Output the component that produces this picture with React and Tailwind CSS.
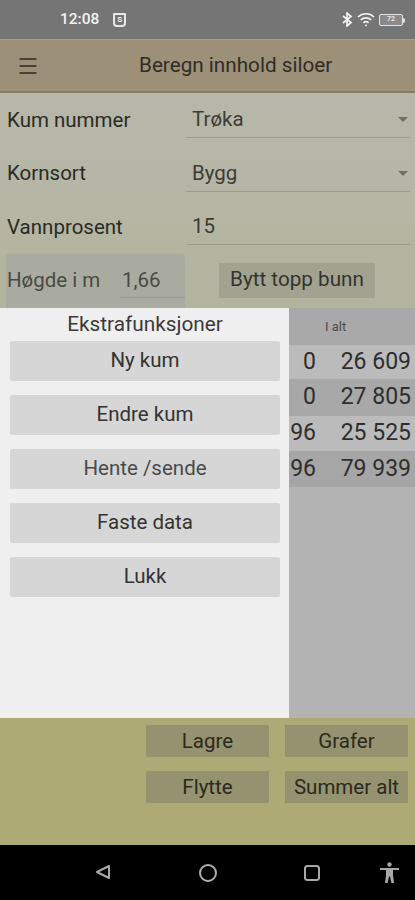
import { Menu } from 'lucide-react';

const font = { fontFamily: 'Roboto, sans-serif' };

const StatusIcons = () => (
    <div className="flex items-center gap-[4px]">
        <svg width="11" height="15" viewBox="0 0 11 15" fill="none" stroke="#f2f2f2" strokeWidth="1.7">
            <path d="M1 4l8 6.5-4 3.5V1l4 3.5L1 11" />
        </svg>
        <svg width="18" height="15" viewBox="0 0 18 15" fill="none" stroke="#f2f2f2" strokeWidth="1.7">
            <path d="M1 5a11.5 11.5 0 0 1 16 0" />
            <path d="M3.8 8a7.5 7.5 0 0 1 10.4 0" />
            <path d="M6.4 10.8a3.8 3.8 0 0 1 5.2 0" />
            <circle cx="9" cy="13.4" r="0.9" fill="#f2f2f2" stroke="none" />
        </svg>
        <div className="relative w-[24px] h-[12px] border border-[#e4e4e4] rounded-[2px] flex items-center justify-center text-[7px] font-bold text-[#e4e4e4] bg-[#8a8a8a]">
            72
            <div className="absolute -right-[3px] top-[3px] w-[2px] h-[5px] bg-[#e4e4e4] rounded-r-sm"></div>
        </div>
    </div>
);

const Caret = () => (
    <div className="w-0 h-0 border-l-[5px] border-r-[5px] border-t-[5px] border-l-transparent border-r-transparent border-t-[#6f7068]"></div>
);

const FormRow = ({ label, value, caret }) => (
    <div className="flex h-[53.5px]">
        <div className="w-[186px] pl-[7px] h-[54px] flex items-center text-[20.5px] text-[#2b2b24]">{label}</div>
        <div className="w-[224px] border-b-[1px] border-[#9b9c8e] h-[45px] flex items-center justify-between pl-[6px] pr-[2px] pt-[9px] text-[20.5px] text-[#3c3c36]">
            <span>{value}</span>
            {caret && <Caret />}
        </div>
    </div>
);

const DialogBtn = ({ children, tone }) => (
    <div className={`h-[39.5px] bg-[#d6d6d6] rounded-[2px] flex items-center justify-center text-[20.5px] ${tone || 'text-[#333333]'}`}>
        {children}
    </div>
);

const rows = [
    { a: '0', b: '26 609', bg: 'bg-[#bbbbbb]', h: 'h-[34px]' },
    { a: '0', b: '27 805', bg: 'bg-[#a8a8a8]', h: 'h-[37px]' },
    { a: '96', b: '25 525', bg: 'bg-[#bbbbbb]', h: 'h-[35px]' },
    { a: '96', b: '79 939', bg: 'bg-[#a6a6a6]', h: 'h-[36px]' },
];

const BottomBtn = ({ children }) => (
    <div className="w-[123px] h-[32px] bg-[#95926f] flex items-center justify-center text-[20.5px] text-[#2a2a20]">
        {children}
    </div>
);

export default function App() {
    return (
        <div style={font} className="w-[415px] h-[900px] flex flex-col overflow-hidden bg-[#b3b4a0]">
            {/* status bar */}
            <div className="h-[39px] bg-[#757575] flex items-center justify-between pl-[60px] pr-[12px] text-[#f2f2f2]">
                <div className="flex items-center gap-[14px]">
                    <span className="text-[15.5px] font-medium">12:08</span>
                    <div className="w-[13px] h-[14px] border-[2px] border-[#e8e8e8] rounded-b-[4px] rounded-t-[1px] flex items-center justify-center text-[8px] font-bold leading-none">S</div>
                </div>
                <StatusIcons />
            </div>

            {/* header */}
            <div className="h-[54px] bg-[#9c9079] border-t border-[#a8a08c] border-b-2 border-b-[#8a7a5c] flex items-center pl-[16px] relative">
                <Menu size={24} strokeWidth={1.3} className="text-[#2c2a24]" />
                <div className="absolute left-[139px] text-[20.7px] text-[#2f2d25]">Beregn innhold siloer</div>
            </div>

            {/* form */}
            <div className="bg-gradient-to-b from-[#b6b7aa] to-[#b3b49d]">
                <FormRow label="Kum nummer" value="Trøka" caret />
                <FormRow label="Kornsort" value="Bygg" caret />
                <FormRow label="Vannprosent" value="15" />
                <div className="flex h-[54.5px]">
                    <div className="ml-[6px] w-[179px] h-[54.5px] bg-[#a9aaa0] rounded-t-[3px] flex pl-[1px] items-center text-[#4a4a44] text-[20.5px]">
                        <span className="w-[113px]">Høgde i m</span>
                        <div className="h-[44px] flex-1 border-b border-[#979889] flex items-center pl-[2px] pt-[10px] self-start">1,66</div>
                    </div>
                    <div className="ml-[34px] mt-[9px] w-[156px] h-[35px] bg-[#a2a290] flex items-center justify-center text-[20.7px] text-[#34342c]">
                        Bytt topp bunn
                    </div>
                </div>
            </div>

            {/* dialog and the dimmed table behind it */}
            <div className="flex h-[410px]">
                <div className="w-[289px] bg-[#efefef] pl-[10px] pr-[9px]">
                    <div className="h-[33px] flex items-center justify-center text-[20.8px] text-[#3a3a3a]">Ekstrafunksjoner</div>
                    <div className="flex flex-col gap-[14.5px]">
                        <DialogBtn>Ny kum</DialogBtn>
                        <DialogBtn>Endre kum</DialogBtn>
                        <DialogBtn tone="text-[#4a4a4a]">Hente /sende</DialogBtn>
                        <DialogBtn>Faste data</DialogBtn>
                        <DialogBtn>Lukk</DialogBtn>
                    </div>
                </div>
                <div className="flex-1 bg-[#b3b3b3]">
                    <div className="h-[37px] bg-[#a9a9a9] flex items-center pl-[36px] text-[13px] text-[#4c4c4c]">I alt</div>
                    {rows.map((row) => (
                        <div key={row.b} className={`flex items-center text-[23px] text-[#2e2e2e] ${row.bg} ${row.h}`}>
                            <span className="w-[27px] text-right overflow-hidden whitespace-nowrap">{row.a}</span>
                            <span className="flex-1 text-right pr-[4px]">{row.b}</span>
                        </div>
                    ))}
                </div>
            </div>

            {/* bottom buttons */}
            <div className="h-[127px] bg-[#adaa75] pl-[146px] pt-[7px]">
                <div className="flex gap-[16px]">
                    <BottomBtn>Lagre</BottomBtn>
                    <BottomBtn>Grafer</BottomBtn>
                </div>
                <div className="flex gap-[16px] mt-[14px]">
                    <BottomBtn>Flytte</BottomBtn>
                    <BottomBtn>Summer alt</BottomBtn>
                </div>
            </div>

            {/* nav bar */}
            <div className="h-[55px] bg-black relative">
                <svg className="absolute left-[95px] top-[19px]" width="16" height="16" viewBox="0 0 16 16" fill="none" stroke="#a8a8a8" strokeWidth="2" strokeLinejoin="round">
                    <path d="M14 2v12L2 8z" />
                </svg>
                <svg className="absolute left-[198px] top-[18px]" width="20" height="20" viewBox="0 0 20 20" fill="none" stroke="#b0b0b0" strokeWidth="2">
                    <circle cx="10" cy="10" r="8" />
                </svg>
                <svg className="absolute left-[303px] top-[19px]" width="18" height="18" viewBox="0 0 18 18" fill="none" stroke="#a8a8a8" strokeWidth="2">
                    <rect x="2" y="2" width="14" height="14" rx="2.5" />
                </svg>
                <svg className="absolute left-[380px] top-[17px]" width="19" height="22" viewBox="0 0 19 22" fill="#a8a8a8">
                    <circle cx="9.5" cy="2.5" r="2.2" />
                    <path d="M0 6h19v2h-6v5l1 8h-2.6l-1.4-6.5h-1L7.6 21H5l1-8V8H0z" />
                </svg>
            </div>
        </div>
    );
}
